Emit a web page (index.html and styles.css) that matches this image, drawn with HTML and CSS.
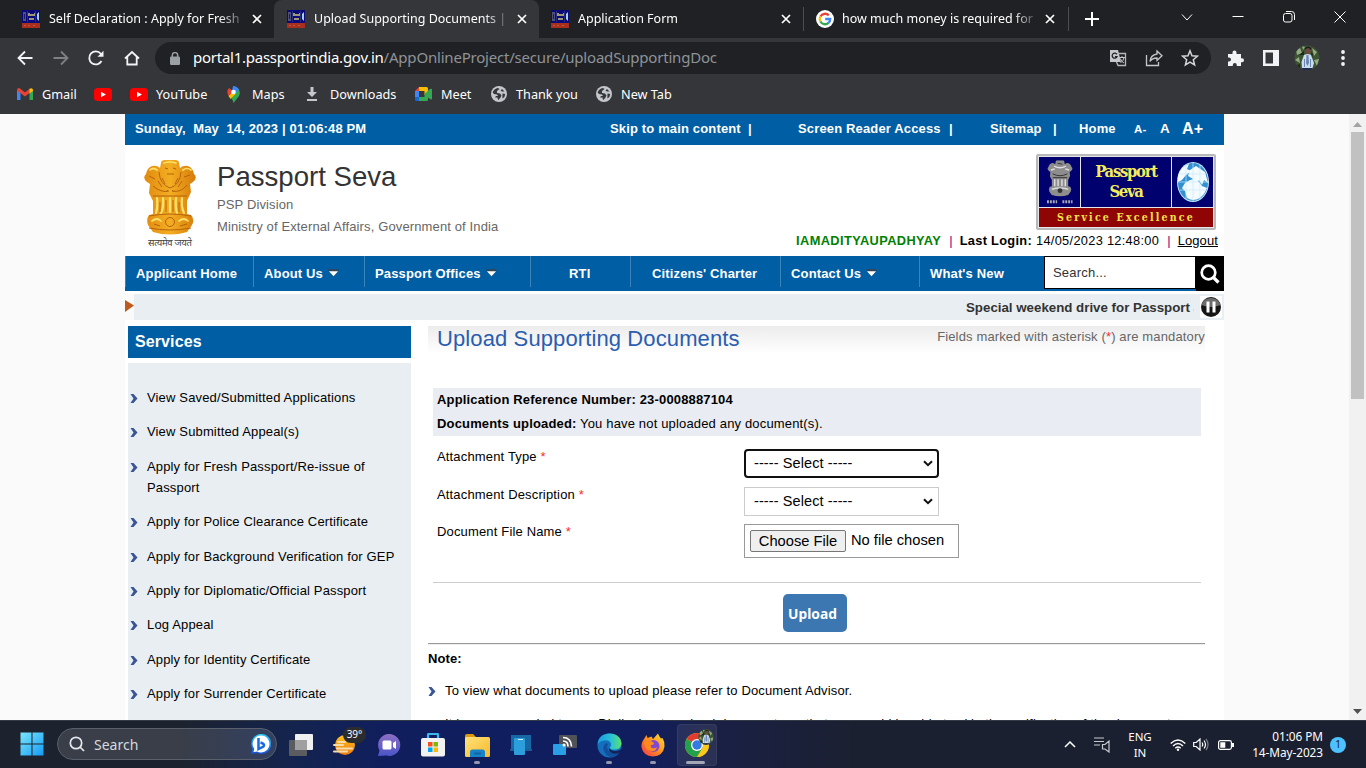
FILE: index.html
```html
<!DOCTYPE html>
<html lang="en">
<head>
<meta charset="utf-8">
<title>Upload Supporting Documents | Passport Seva</title>
<link rel="stylesheet" href="styles.css">
</head>
<body>
<svg class="defs" aria-hidden="true">
  <defs>
    <linearGradient id="gold" x1="0" x2="1"><stop offset="0" stop-color="#e08a10"/><stop offset=".5" stop-color="#f3ae22"/><stop offset="1" stop-color="#d67c0a"/></linearGradient>
    <linearGradient id="win" x1="0" y1="0" x2="1" y2="1"><stop offset="0" stop-color="#7ae6fb"/><stop offset="1" stop-color="#159bf5"/></linearGradient>
    <linearGradient id="sun" x1="0" y1="0" x2="0" y2="1"><stop offset="0" stop-color="#fcc419"/><stop offset="1" stop-color="#f07a12"/></linearGradient>
    <linearGradient id="edge" x1="0" y1="0" x2="1" y2="0"><stop offset="0" stop-color="#1b9de2"/><stop offset=".6" stop-color="#2bc3d2"/><stop offset="1" stop-color="#5fe066"/></linearGradient>
    <linearGradient id="fox" x1="1" y1="0" x2="0" y2="1"><stop offset="0" stop-color="#ffe23a"/><stop offset=".5" stop-color="#ff8f1f"/><stop offset="1" stop-color="#f2314f"/></linearGradient>
    <linearGradient id="folder" x1="0" y1="0" x2="1" y2="1"><stop offset="0" stop-color="#ffe27a"/><stop offset="1" stop-color="#f7b92c"/></linearGradient>
    <linearGradient id="chat" x1="0" y1="0" x2="0" y2="1"><stop offset="0" stop-color="#8e6fc2"/><stop offset="1" stop-color="#4a55c9"/></linearGradient>
    <linearGradient id="bing" x1="0" y1="0" x2="0" y2="1"><stop offset="0" stop-color="#2ec8f5"/><stop offset="1" stop-color="#1650d8"/></linearGradient>
    <symbol id="fav" viewBox="0 0 18 18"><path fill="#0a0a78" d="M0 0h18v13H0z"/><path fill="#a8301f" d="M0 13h18v5H0z"/><path fill="#50507c" d="M1 2h3v9H1z"/><path fill="#1c1c66" d="M2 4h1v5H2z"/><path fill="#9a9878" d="M6 3h2v1h4V3h1v3H6zM7 8h5v2H7z"/><path fill="#2e2e80" d="M5 1h1v11H5zM13 1h1v11h-1z"/><path fill="#a4d2ee" d="M15 4l2-2v9l-2-2z"/><path fill="#c4553a" d="M2 15h2v1H2zM6 15h2v1H6zM11 15h2v1h-2z"/></symbol>
    <symbol id="x" viewBox="0 0 10 10"><path stroke="#fff" stroke-width="1.7" d="M1 1l8 8M9 1L1 9"/></symbol>
    <symbol id="globe" viewBox="0 0 16 16"><circle cx="8" cy="8" r="8" fill="#c3c6ca"/><path fill="#35363a" d="M1.600 6.500Q3 2.600 7 2l1.500 1L6 5v2l3 .5 1.500 2-1 2-2 2.500q-1-1-1-2.500H4l1-1.500h2L6 8.500 3 8zM11 3l2.500 2.500H11L9.500 4.500zM11.500 7.500l2.700.5-.8 3-2 1.500z"/></symbol>
    <symbol id="yt" viewBox="0 0 18 13"><rect width="18" height="13" rx="3.500" fill="#f00"/><path d="M7 3.700l5 2.800-5 2.800z" fill="#fff"/></symbol>
    <symbol id="bullet" viewBox="0 0 8 9"><path fill="#3a5596" d="M.5 0h3L7.500 4.500 3.500 9h-3l3-4.500z"/></symbol>
    <symbol id="photo" viewBox="0 0 26 26"><clipPath id="pc"><circle cx="13" cy="13" r="12.500"/></clipPath><g clip-path="url(#pc)"><path fill="#3d5433" d="M0 0h26v26H0z"/><path fill="#93ab83" d="M2 5l4-2 2 5-5 2zM18 3l5 4-3 4zM1 15l4-3 1 6zM20 15l5-1-2 7zM8 1l3 1-2 3z"/><path fill="#1c2919" d="M5 10l5-4v4zM17 7l2 2-1 4zM3 20l3-1v5z"/><path fill="#c9dcf0" d="M10 10q4-2 7 0l3 8-1.500 5H8l-.5-6z"/><path fill="#6b87b0" d="M10 14h1v8h-1zM16 14h1v8h-1zM12.500 10h2l.5 8-1.500 3-1.500-3z"/><circle cx="14" cy="6" r="3" fill="#6a4a3c"/><path fill="#1c1b22" d="M11 5q3-4 6 0v-2q-3-3-6 0z"/><path fill="#232e4c" d="M8 23h10v3H8z"/></g></symbol>
    <symbol id="lions" viewBox="0 0 54 76"><path d="M18 3q0-3 4-3h10q4 0 4 3l1 5q3-3 8-2 5 2 6 8 4 4-1 8l-3 2 1 8-4 9v13l4 1q4 4 1 10l-5 7q-17 5-34 0l-5-7q-2-6 1-10l4-1V41l-4-8 1-9-3-2q-5-4-1-8 1-6 6-8 5-1 8 2z"/></symbol>
    <symbol id="down" viewBox="0 0 12 8"><path d="M0 0h12L6 8z" fill="#38424c"/><path d="M1 2h10L6 7.500z" fill="#fff"/></symbol>
  </defs>
</svg>

<header class="browser">
  <div class="tabs">
    <div class="tab"><svg class="fav"><use href="#fav"/></svg><span class="tab-title">Self Declaration : Apply for Fresh</span><svg class="close"><use href="#x"/></svg></div>
    <div class="tab active"><svg class="fav"><use href="#fav"/></svg><span class="tab-title">Upload Supporting Documents |</span><svg class="close"><use href="#x"/></svg></div>
    <div class="tab third"><svg class="fav"><use href="#fav"/></svg><span class="tab-title">Application Form</span><svg class="close"><use href="#x"/></svg></div>
    <div class="tab sep"><svg class="fav" viewBox="0 0 18 18"><circle cx="9" cy="9" r="9" fill="#fff"/><g fill="none" stroke-width="2.300"><path stroke="#ea4335" d="M4.400 6.500A5.200 5.200 0 0 1 12.800 5.400"/><path stroke="#fbbc05" d="M4.400 11.500A5.200 5.200 0 0 1 4.400 6.500"/><path stroke="#34a853" d="M12.500 12.900A5.200 5.200 0 0 1 4.400 11.500"/><path stroke="#4285f4" d="M9.200 9H14.200A5.200 5.200 0 0 1 12.400 13"/></g></svg><span class="tab-title">how much money is required for</span><svg class="close"><use href="#x"/></svg></div>
    <div class="newtab"><svg width="14" height="14" viewBox="0 0 14 14"><path stroke="#fff" stroke-width="2" d="M7 0v14M0 7h14"/></svg></div>
    <div class="winctl">
      <svg viewBox="0 0 12 12"><path d="M1 3.500l5 5.500 5-5.500"/></svg>
      <svg viewBox="0 0 12 12"><path d="M.5 5.500h11"/></svg>
      <svg viewBox="0 0 12 12"><rect x=".5" y="2.500" width="8.500" height="8.500" rx="2"/><path d="M3 .5h5.500Q11.500.5 11.500 3.500V9"/></svg>
      <svg viewBox="0 0 12 12"><path d="M.5.5l11 11M11.500.5l-11 11"/></svg>
    </div>
  </div>
  <div class="toolbar">
    <div class="navbtns">
      <svg viewBox="0 0 16 16"><path d="M15.500 8H2M8 1.500L1.500 8 8 14.500"/></svg>
      <svg class="dim" viewBox="0 0 16 16"><path d="M.5 8H14M8 1.500L14.500 8 8 14.500"/></svg>
      <svg viewBox="0 0 16 16"><path d="M13.500 11A6.500 6.500 0 1 1 12.800 3.800L14 5.200"/><path d="M15.500.8V6.800h-6z" fill="#f1f3f4" stroke="none"/></svg>
      <svg viewBox="0 0 16 16"><path d="M1 8.500L8 2l7 6.500M3.300 7v7.500h9.400V7"/></svg>
    </div>
    <div class="omnibox">
      <svg width="10" height="13" viewBox="0 0 10 13"><rect y="4.500" width="10" height="8.500" rx="1.300" fill="#9aa0a6"/><path d="M2.300 5V3.300a2.700 2.700 0 0 1 5.400 0V5" fill="none" stroke="#9aa0a6" stroke-width="1.500"/></svg>
      <span class="host">portal1.passportindia.gov.in</span><span class="path">/AppOnlineProject/secure/uploadSupportingDoc</span>
      <div class="omni-icons">
        <svg viewBox="0 0 18 18"><path fill="#c4c7cb" d="M1 1h8l3 12H1z"/><path d="M8 4.500h8.500v12H9L7.500 13" fill="none" stroke="#b4b7bb" stroke-width="1.300"/><path d="M7.800 5.300a2.500 2.500 0 1 0 .2 2.300H6" fill="none" stroke="#202124" stroke-width="1.300"/><path d="M10.500 8.500H16M13 7v1.500M11.500 14q3-2 3.500-5.500M11.300 9.500q1 3 3.700 4.500" fill="none" stroke="#c4c7cb"/></svg>
        <svg viewBox="0 0 18 18"><g fill="none" stroke="#c4c7cb" stroke-width="1.300"><path d="M1.500 6v10.500h12V13"/><path d="M12 2l5 4.800-5 4.700V9Q7 9 5 12.500 5.500 6 12 5z"/></g></svg>
        <svg viewBox="0 0 18 18"><path fill="none" stroke="#d3d5d8" stroke-width="1.500" d="M9 1.800l2 5 5.400.4-4.100 3.500 1.300 5.300L9 13.200 4.400 16l1.300-5.300L1.600 7.200 7 6.800z"/></svg>
      </div>
    </div>
    <div class="ext">
      <svg width="17" height="17" viewBox="0 0 17 17"><path fill="#f1f3f4" d="M1 4h4.500V2.600a2 2 0 0 1 4 0V4H14v4.300h1a2 2 0 0 1 0 4h-1V16H9.800v-1a2 2 0 0 0-4 0v1H1v-4.500h1a2 2 0 0 0 0-4H1z"/></svg>
      <svg width="16" height="16" viewBox="0 0 16 16"><path fill="#f1f3f4" fill-rule="evenodd" d="M0 0h16v16H0zM2.500 2.500v11H10v-11z"/></svg>
      <svg width="26" height="26"><use href="#photo"/></svg>
      <svg width="4" height="16" viewBox="0 0 4 16"><g fill="#f1f3f4"><circle cx="2" cy="2" r="1.900"/><circle cx="2" cy="8" r="1.900"/><circle cx="2" cy="14" r="1.900"/></g></svg>
    </div>
  </div>
  <div class="bookmarks">
    <span><svg width="16" height="12" viewBox="0 0 16 12"><path fill="#4285f4" d="M0 2l3.500 2.500V12H0z"/><path fill="#34a853" d="M12.500 4.500L16 2v10h-3.500z"/><path fill="#ea4335" d="M0 2Q.5-.8 3 .5l5 4 5-4v4L8 8.500 0 2.500z"/><path fill="#fbbc04" d="M12.500.8Q15.500-.8 16 2v1l-3.500 2.500z"/></svg>Gmail</span>
    <span><svg width="18" height="13"><use href="#yt"/></svg></span>
    <span class="near"><svg width="18" height="13"><use href="#yt"/></svg>YouTube</span>
    <span class="wide"><svg width="13" height="17" viewBox="0 0 13 17"><path fill="#34a853" d="M1.500 10L11 2.500Q14 6 12 10L6.500 17Q5.500 13 3.500 11.500z"/><path fill="#fbbc04" d="M1.500 10L6 5l2.500 3L3.500 13z"/><path fill="#4285f4" d="M6 0q4 0 6 3.500L8 8 5 5z"/><path fill="#ea4335" d="M2 2L6 5 1.500 10Q-1 5 2 2z"/><circle cx="6.500" cy="6" r="2.300" fill="#fff"/></svg>Maps</span>
    <span class="wide"><svg width="12" height="14" viewBox="0 0 12 14"><path fill="#c4c7cb" d="M4.500 0h3v5H11L6 10 1 5h3.500zM1 12h10v2H1z"/></svg>Downloads</span>
    <span><svg width="17" height="14" viewBox="0 0 17 14"><path fill="#ea4335" d="M0 4l4-4v4z"/><path fill="#4285f4" d="M0 4h4v6H0z"/><path fill="#1967d2" d="M0 10h4v4H1.500Q0 14 0 12.500z"/><path fill="#fbbc04" d="M4 0h7.500Q13 0 13 1.500V6L9.500 8V4H4z"/><path fill="#34a853" d="M4 10h5.500V7L15 2q2-1 2 1v8.500q0 1.500-2 .5l-2-1.500V13q0 1-1.500 1H4z"/></svg>Meet</span>
    <span><svg width="16" height="16"><use href="#globe"/></svg>Thank you</span>
    <span><svg width="16" height="16"><use href="#globe"/></svg>New Tab</span>
  </div>
</header>

<div class="viewport">
  <div class="site">
    <div class="topbar">
      <span>Sunday,&nbsp; May&nbsp; 14, 2023 | 01:06:48 PM</span><span>Skip to main content</span><span>|</span><span>Screen Reader Access</span><span>|</span><span>Sitemap</span><span>|</span><span>Home</span><span class="a-s">A-</span><span class="a-m">A</span><span class="a-l">A+</span>
    </div>
    <div class="masthead">
      <svg class="emblem" width="56" height="94" viewBox="0 0 56 94">
        <use href="#lions" x="1" y="1" width="54" height="76" fill="url(#gold)"/>
        <g fill="none" stroke="#ffe06a" stroke-width="2.200" stroke-linecap="round"><path d="M15 39q1 9-1 15M21 39q1 9-2 15M28 39v14M34 39q-1 9 1 15M40 39q-1 9 2 15"/><path d="M8 11q3-3 7 0M41 11q4-3 8 0M22 4q6-2 12 0M10 62q5-4 9 0M37 62q5-4 9 0" stroke-width="1.700"/></g>
        <g fill="none" stroke="#b8630c" stroke-width="1"><path d="M17 13q1 13 11 16M39 13q-1 13-11 16M23 9l3 1M31 9l3 1M25 15h7M7 17l6 3M42 18l6-2M11 27q8 7 16 5M30 32q9 2 15-6M11 37h34M18 43v10M24 41v12M31 41v12M37 43v10M7 57q21-4 42 0M7 69q21 4 42 0M12 65l6 2M38 67l7-2M16 22l4 6M20 19l3 6M40 22l-4 6M36 19l-3 6M24 33l2-2M32 33l-2-2"/><circle cx="28" cy="63" r="4.500"/></g>
        <text x="28" y="87" text-anchor="middle" font-size="9.500" fill="#444" textLength="44">सत्यमेव जयते</text>
      </svg>
      <div class="brand"><h1>Passport Seva</h1><p>PSP Division</p><p>Ministry of External Affairs, Government of India</p></div>
      <div class="account">
        <div class="logo">
          <div class="logo-top">
            <div><svg width="26" height="45" viewBox="0 0 54 92"><use href="#lions" width="54" height="76" fill="#8d8d8d"/><path d="M15 12q12 7 24 0M16 39v15M23 39v15M31 39v15M38 39v15M10 60q17-5 34 0M8 20l8-2M38 18l8 2" stroke="#ddd" stroke-width="3" fill="none"/><path d="M12 28q15 8 30 0M22 6l10 2M12 36h30" stroke="#333" stroke-width="2" fill="none"/><circle cx="27" cy="63" r="5" fill="#333"/><path d="M0 86h21M32 86h21" stroke="#a8a8b8" stroke-width="6" stroke-dasharray="4 2"/></svg></div>
            <div class="logo-name"><span>Passport</span><span>Seva</span></div>
            <div><svg width="34" height="40" viewBox="0 0 34 40"><ellipse cx="17" cy="20" rx="16" ry="20" fill="#bfe6f8"/><ellipse cx="17" cy="20" rx="15" ry="19" fill="#318fd2"/><path fill="#f3fbff" d="M2 14Q5 4 13 2l-2 5 4 2-5 4-4 5-4 2zM14 8l6-4 9 6 3 11-4-3-2 5-3-5-3 7-3-8-5-3zM9 21l5-3 4-1 5 3 3 4 5 2-3 6-4 4q-7 4-13 0l-2-7-3-3z"/><path d="M4 12h26M1 20h32M4 28h26M10 3v34M17 1v38M24 3v34" stroke="#cbeaf8" stroke-width=".7"/></svg></div>
          </div>
          <div class="logo-tag">Service Excellence</div>
        </div>
        <div class="login"><b class="user">IAMADITYAUPADHYAY</b><i>|</i><b class="last">Last Login:</b><span class="stamp">14/05/2023 12:48:00</span><i>|</i><a>Logout</a></div>
      </div>
    </div>
    <nav class="menu">
      <span>Applicant Home</span><span>About Us <svg><use href="#down"/></svg></span><span>Passport Offices <svg><use href="#down"/></svg></span><span>RTI</span><span>Citizens' Charter</span><span>Contact Us <svg><use href="#down"/></svg></span><span>What's New</span>
      <div class="search">Search...</div>
      <div class="go"><svg width="20" height="20" viewBox="0 0 20 20"><circle cx="8.500" cy="8.500" r="6.800" fill="none" stroke="#fff" stroke-width="2.700"/><path d="M13.500 13.500l5 5" stroke="#fff" stroke-width="3.200"/></svg></div>
    </nav>
    <div class="ticker">
      <div class="play"><svg width="9" height="12" viewBox="0 0 9 12"><path d="M0 0l9 5.500L0 12z" fill="#c05a1c"/></svg></div>
      <div class="news">Special weekend drive for Passport a</div>
      <div class="pause"><svg width="22" height="22" viewBox="0 0 22 22"><circle cx="11" cy="11" r="10" fill="#161616"/><path d="M1.500 9A10 10 0 0 1 20.500 9Q11 13 1.500 9z" fill="#6d6d6d"/><rect x="6.500" y="5.500" width="3" height="11" fill="#fff"/><rect x="12.500" y="5.500" width="3" height="11" fill="#fff"/></svg></div>
    </div>
    <div class="columns">
      <aside>
        <h2>Services</h2>
        <ul>
          <li><svg><use href="#bullet"/></svg><span>View Saved/Submitted Applications</span></li>
          <li><svg><use href="#bullet"/></svg><span>View Submitted Appeal(s)</span></li>
          <li><svg><use href="#bullet"/></svg><span>Apply for Fresh Passport/Re-issue of Passport</span></li>
          <li><svg><use href="#bullet"/></svg><span>Apply for Police Clearance Certificate</span></li>
          <li><svg><use href="#bullet"/></svg><span>Apply for Background Verification for GEP</span></li>
          <li><svg><use href="#bullet"/></svg><span>Apply for Diplomatic/Official Passport</span></li>
          <li><svg><use href="#bullet"/></svg><span>Log Appeal</span></li>
          <li><svg><use href="#bullet"/></svg><span>Apply for Identity Certificate</span></li>
          <li><svg><use href="#bullet"/></svg><span>Apply for Surrender Certificate</span></li>
        </ul>
      </aside>
      <main>
        <div class="heading"><h2>Upload Supporting Documents</h2><p>Fields marked with asterisk (<em>*</em>) are mandatory</p></div>
        <div class="info"><p><b>Application Reference Number: 23-0008887104</b></p><p><b>Documents uploaded:</b> You have not uploaded any document(s).</p></div>
        <form>
          <label>Attachment Type <em>*</em></label><div class="select focus">----- Select -----<svg viewBox="0 0 10 7"><path d="M1 1.200l4 4 4-4"/></svg></div>
          <label>Attachment Description <em>*</em></label><div class="select">----- Select -----<svg viewBox="0 0 10 7"><path d="M1 1.200l4 4 4-4"/></svg></div>
          <label>Document File Name <em>*</em></label><div class="file"><button type="button">Choose File</button><span>No file chosen</span></div>
        </form>
        <div class="submit"><button type="button">Upload</button></div>
        <section class="notes"><h3>Note:</h3>
          <p><svg><use href="#bullet"/></svg><span>To view what documents to upload please refer to Document Advisor.</span></p>
          <p><svg></svg><span>It is recommended to use Digilocker to upload documents so that you would be able to skip the verification of the documents.</span></p>
        </section>
      </main>
    </div>
  </div>
  <div class="scrollbar"><svg width="9" height="5" viewBox="0 0 9 5"><path d="M0 5L4.500 0 9 5z" fill="#a3a3a3"/></svg><div class="thumb"></div><svg width="9" height="5" viewBox="0 0 9 5"><path d="M0 0h9L4.500 5z" fill="#505050"/></svg></div>
</div>

<footer class="taskbar">
  <svg class="start" width="24" height="24" viewBox="0 0 24 24"><path fill="url(#win)" d="M.5.5h11v11H.5zM12.500.5h11v11h-11zM.5 12.500h11v11H.5zM12.500 12.500h11v11h-11z"/></svg>
  <div class="tsearch"><svg width="16" height="16" viewBox="0 0 16 16"><g fill="none" stroke="#e4e7eb" stroke-width="1.700"><circle cx="7" cy="7" r="5.700"/><path d="M11 11l4 4"/></g></svg><span>Search</span><svg class="bing" width="20" height="20" viewBox="0 0 20 20"><path fill="url(#bing)" d="M10 0a10 10 0 1 1-4 19L0 20l1.500-5A10 10 0 0 1 10 0z"/><path fill="#fff" d="M10 1.500a8.500 8.500 0 1 1-4 16L2.500 18l.8-3A8.500 8.500 0 0 1 10 1.500z"/><path fill="none" stroke="#1769df" stroke-width="2.500" d="M7.500 4v11l5-2.500q2-2.500-3-4"/></svg></div>
  <div class="apps">
    <div><svg width="24" height="22" viewBox="0 0 24 22"><rect x="6" width="18" height="16" rx="1" fill="#f0f0f0"/><rect y="6" width="18" height="16" rx="1" fill="#5f6060" opacity=".95"/><path d="M6 6h12v10H6z" fill="#a0a0a0"/></svg></div>
    <div class="weather"><svg width="24" height="24" viewBox="0 0 24 24"><circle cx="12" cy="12" r="10" fill="url(#sun)"/><path stroke="#f6dcad" stroke-width="2" stroke-linecap="round" d="M1 12h9M4 15.500h15M1 18.500h13M5 9h7"/></svg><span>39°</span></div>
    <div><svg width="24" height="24" viewBox="0 0 24 24"><path fill="url(#chat)" d="M12 1a11 11 0 1 1-3 21.500L1 23l1.500-5.500A11 11 0 0 1 12 1z"/><rect x="5.500" y="7.500" width="9" height="9" rx="1.500" fill="#fff"/><path fill="#fff" d="M16 10l3-2v8l-3-2z"/></svg></div>
    <div><svg width="24" height="24" viewBox="0 0 24 24"><path d="M7 5V1.800q0-1 1-1h8q1 0 1 1V5" fill="none" stroke="#3bb9ec" stroke-width="2.200"/><rect y="5" width="24" height="18.500" rx="2" fill="#f2f2f2"/><path fill="#f25022" d="M7 9h4.500v4.500H7z"/><path fill="#7fba00" d="M12.500 9H17v4.500h-4.500z"/><path fill="#00a4ef" d="M7 14.500h4.500V19H7z"/><path fill="#ffb900" d="M12.500 14.500H17V19h-4.500z"/></svg></div>
    <div class="open"><svg width="25" height="23" viewBox="0 0 25 23"><path fill="#dd9a0e" d="M0 2q0-2 2-2h6l3 3v5H0z"/><rect y="3" width="25" height="20" rx="1.500" fill="url(#folder)"/><path fill="#1682ca" d="M5 22v-4q0-2.500 2.500-2.500h10Q20 15.500 20 18v5H5z"/><path fill="#10659e" d="M9 18.500h7v2H9z"/></svg></div>
    <div><svg width="24" height="24" viewBox="0 0 24 24"><path fill="#1767a4" d="M2 2h20v14H2z"/><path fill="#1d5d94" d="M1 16h22v2H1z"/><rect x="5" y="5" width="11" height="17" rx="1" fill="#2c9edb"/><path fill="#d4effb" d="M9 6h5v1H9z"/></svg></div>
    <div><svg width="24" height="20" viewBox="0 0 24 20"><rect x="6" width="18" height="13" rx="1" fill="#505258"/><rect y="9" width="13" height="11" rx="1" fill="#2a9fe6"/><g fill="none" stroke="#fff" stroke-width="1.700"><path d="M10 2.500q8 0 8.500 9M10 6q5 0 5 5.500"/></g><circle cx="11" cy="10" r="1.500" fill="#fff"/></svg></div>
    <div class="open"><svg width="25" height="25" viewBox="0 0 25 25"><circle cx="12.500" cy="12.500" r="12" fill="#1470bc"/><path fill="url(#edge)" d="M.5 12Q1 1 12.500.5 24 1 24.500 11q-1 6-8 5.500-4 0-4-2 2-1 1.500-4-2-4-7-3-5 .5-6.500 4.500z"/><path fill="#12509b" d="M9 10q-4 3-2 8 2 5 8 6.500 5-1 7.500-5Q16 22 12 18q-3-3-1-7z"/><path fill="#12235c" d="M12.300 14q1 4 6 4 3 0 6-2l-2 4q-6 2-9-1-2-2-1-5z"/></svg></div>
    <div class="open"><svg width="24" height="24" viewBox="0 0 24 24"><path fill="url(#fox)" d="M3 6L5.500 2l1 3 4-1.500L12 6l5-5.500q1 3 3 5l1.500-.5Q24 9 23.500 13.500 22 23 12 23.500 2 23 .5 14 .3 9 3 6z"/><circle cx="12.500" cy="13" r="6" fill="#8149d2"/><path fill="#ff8a1d" d="M3 9l7-1 3 2q0 2-3 2-1 2 1 3 3 1 5-1-1 5-6 4-5-1-6-5z"/></svg></div>
    <div class="open current"><svg width="29" height="28" viewBox="0 0 29 28"><circle cx="12" cy="16" r="12" fill="#f9c81d"/><path fill="#e23c2f" d="M12 16L1.600 10A12 12 0 0 1 22.400 10z"/><path fill="#24a14b" d="M12 16L1.600 10A12 12 0 0 0 12 28l6-10z"/><path fill="#f9c81d" d="M12 10.500h10.600A12 12 0 0 1 12 28l6-9z"/><circle cx="12" cy="16" r="6" fill="#fff"/><circle cx="12" cy="16" r="4.700" fill="#3479e4"/><use href="#photo" x="13" y="0" width="16" height="16"/></svg></div>
  </div>
  <div class="tray">
    <svg width="12" height="7" viewBox="0 0 12 7"><path d="M1 6l5-5 5 5" fill="none" stroke="#fff" stroke-width="1.500"/></svg>
    <svg width="17" height="17" viewBox="0 0 17 17"><path d="M0 2h10M0 5.500h10M0 9h6M8.500 8.500H11l4-3.500v11l-4-3H8.500z" fill="none" stroke="#c6c9d0" stroke-width="1.200"/></svg>
    <div class="lang">ENG<br>IN</div>
    <svg width="16" height="12" viewBox="0 0 16 12"><g fill="none" stroke="#fff" stroke-width="1.400"><path d="M.7 4.500q7.300-7 14.600 0M3 7q5-4.800 10 0M5.300 9.300q2.700-2.500 5.400 0"/></g><circle cx="8" cy="10.700" r="1.200" fill="#fff"/></svg>
    <svg width="16" height="13" viewBox="0 0 16 13"><g fill="none" stroke="#fff" stroke-width="1.200"><path d="M.7 4.500h2.500L7 1v11L3.200 8.500H.7zM9 4.500q1.500 2 0 4M11 2.500q3 4 0 8"/><path stroke="#777c88" d="M13 .8q4 5.700 0 11.400"/></g></svg>
    <svg width="16" height="10" viewBox="0 0 16 10"><rect x=".6" y=".6" width="12.800" height="8.800" rx="1.800" fill="none" stroke="#fff" stroke-width="1.200"/><path fill="#fff" d="M2.300 2.300h5v5.400h-5zM14 3h2v4h-2z"/></svg>
    <div class="clock">01:06 PM<br>14-May-2023</div>
    <div class="badge">1</div>
  </div>
</footer>
</body>
</html>
```
FILE: styles.css
```css
* { box-sizing: border-box; }
body, h1, h2, h3, p, ul { margin: 0; padding: 0; }
body { width: 1366px; height: 768px; overflow: hidden; display: flex; flex-direction: column; font-family: "Liberation Sans", Arial, sans-serif; }
svg { display: block; flex: none; }
em { color: #ff2a2a; font-style: normal; }
.defs { position: absolute; width: 0; height: 0; }

.browser, .taskbar { font-family: "Noto Sans", "Open Sans", sans-serif; color: #fff; }
.browser { flex: none; height: 114px; background: #35363a; }
.tabs { height: 38px; display: flex; background: #202124; }
.tab { width: 265px; height: 38px; display: flex; align-items: center; padding-left: 13px; font-size: 12.500px; }
.tab:first-child { width: 274px; padding-left: 22px; }
.tab.active { background: #35363a; border-radius: 8px 8px 0 0; }
.tab.third { width: 264px; padding-left: 12px; }
.tab.sep { border: solid #4b4d51; border-width: 0 1px; border-image: linear-gradient(transparent 8px, #4b4d51 8px, #4b4d51 30px, transparent 30px) 1; }
.tab.sep { width: 266px; padding-left: 12px; }
.fav { width: 18px; height: 18px; }
.tab-title { width: 193px; margin-left: 9px; margin-top: -2px; white-space: nowrap; overflow: hidden; -webkit-mask-image: linear-gradient(90deg, #000 170px, rgba(0,0,0,.2) 193px); }
.sep .tab-title { margin-left: 8px; }
.close { width: 10px; height: 10px; margin-left: 10px; }
.newtab { margin: 12px 0 0 16px; }
.winctl { display: flex; gap: 39px; margin: 11px 0 0 82px; }
.winctl svg { width: 12px; height: 12px; fill: none; stroke: #fff; }
.toolbar { height: 38px; display: flex; align-items: center; padding-top: 2px; }
.navbtns { display: flex; gap: 19.500px; padding-left: 17px; width: 155px; }
.navbtns svg { width: 16px; height: 16px; fill: none; stroke: #f1f3f4; stroke-width: 1.800; }
.navbtns .dim { stroke: #7d8084; }
.omnibox { width: 1056px; height: 32px; border-radius: 16px; background: #202124; display: flex; align-items: center; padding-left: 15px; font-size: 15px; }
.host, .path { margin-top: -2px; letter-spacing: -.25px; }
.host { margin-left: 13px; }
.path { color: #8f9398; letter-spacing: -.2px; }
.omni-icons { display: flex; gap: 18px; margin-left: auto; margin-right: 12px; }
.omni-icons svg { width: 18px; height: 18px; }
.ext { display: flex; align-items: center; margin-left: 16px; }
.ext svg:nth-child(2) { margin-left: 19px; }
.ext svg:nth-child(3) { margin-left: 15px; }
.ext svg:nth-child(4) { margin-left: 21px; }
.bookmarks { height: 36px; display: grid; grid-template-columns: 77px 36px 97px 79px 109px 76px 105px 120px; padding-left: 17px; align-items: center; font-size: 12.700px; }
.bookmarks span { display: flex; align-items: center; gap: 9px; white-space: nowrap; }
.bookmarks .near { gap: 8px; }
.bookmarks .wide { gap: 12px; }

.viewport { flex: none; height: 606px; display: flex; background: #fafafa; overflow: hidden; }
.site { width: 1099px; height: 620px; margin-left: 125px; background: #fff; overflow: hidden; }
.topbar { height: 31px; background: #005ea5; color: #fff; font-weight: bold; font-size: 13px; letter-spacing: .15px; display: grid; grid-template-columns: 475px 138px 50px 151px 41px 63px 26px 55px 26px 22px 40px; padding-left: 10px; align-items: center; white-space: nowrap; padding-bottom: 2px; }
.a-s { font-size: 11.500px; }
.a-m { font-size: 13.500px; }
.a-l { font-size: 16px; }
.masthead { height: 111px; display: flex; }
.emblem { margin: 14px 0 0 17px; font-family: "Noto Sans Devanagari", sans-serif; }
.brand { margin-left: 19px; padding-top: 15px; color: #666; font-size: 13px; }
.brand h1 { font-weight: normal; font-size: 27.600px; line-height: 34px; color: #333; }
.brand p { line-height: 22px; letter-spacing: .13px; white-space: nowrap; }
.account { margin-left: auto; display: flex; flex-direction: column; align-items: flex-end; }
.logo { width: 180px; height: 76px; margin: 9px 8px 0 0; border: 2px solid #b9b9b9; padding: 1px; background: #e5e5ea; display: flex; flex-direction: column; gap: 1px; border-radius: 2px; font-family: "DejaVu Serif Condensed", "DejaVu Serif", serif; font-weight: bold; }
.logo-top { height: 51px; display: grid; grid-template-columns: 41px 90px 41px; gap: 1px; }
.logo-top > div { background: #00006e; display: flex; align-items: center; justify-content: center; }
.logo-top .logo-name { color: #f3ed5c; font-size: 16.500px; letter-spacing: -1.300px; line-height: 20px; flex-direction: column; }
.logo-tag { height: 19px; background: #8f0505; color: #f3e34b; font-size: 10.500px; line-height: 18px; letter-spacing: 2.200px; text-align: center; white-space: nowrap; }
.login { display: flex; margin-right: 6px; font-size: 13px; line-height: 20px; white-space: nowrap; letter-spacing: .1px; padding-top: 1px; }
.login i { color: #800080; font-style: normal; margin: 0 7px 0 8px; }
.login .stamp { margin-left: 4px; font-size: 12.800px; letter-spacing: .3px; }
.user { color: #008000; font-size: 12.800px; letter-spacing: .4px; }
.last { font-size: 12.800px; letter-spacing: .3px; }
.login a { text-decoration: underline; }
.menu { height: 35px; background: #005ea5; color: #fff; display: grid; grid-template-columns: 128px 111px 166px 100px 150px 139px 125px 152px 28px; font-size: 13px; font-weight: bold; letter-spacing: .15px; }
.menu > span { display: flex; align-items: center; gap: 5px; height: 31px; padding: 3px 0 0 10px; border-left: 1px solid #3d83b9; white-space: nowrap; }
.menu > span:nth-child(4) { padding-left: 38px; }
.menu > span:nth-child(5) { padding-left: 21px; }
.menu svg { width: 11px; height: 8px; }
.search { height: 33px; background: #fff; border: 1px solid #000; color: #333; font-weight: normal; padding: 8px; line-height: 15px; letter-spacing: .2px; }
.go { background: #000; display: flex; align-items: center; justify-content: center; }
.menu .go svg { width: 20px; height: 20px; }
.ticker { height: 26px; margin-top: 3px; background: #e9eef2; display: flex; }
.play { width: 9px; padding-top: 6px; background: #fafafa; }
.news { width: 1060px; padding: 1px 0 0 832px; overflow: hidden; white-space: nowrap; font-size: 13.300px; font-weight: bold; line-height: 26px; color: #333; }
.pause { margin: 2px 0 0 6px; background: #fff; height: 22px; }
.columns { display: flex; margin: 6px 0 0 3px; }
aside { width: 283px; }
aside h2 { background: #005ea5; color: #fff; height: 32px; padding-left: 7px; font-size: 16px; line-height: 32px; letter-spacing: .1px; }
ul { list-style: none; margin-top: 5px; height: 400px; background: #e9eef2; padding-top: 24px; font-size: 13px; line-height: 21px; }
li { display: flex; margin-bottom: 13.400px; letter-spacing: .15px; }
li span { width: 262px; }
li svg, .notes svg { width: 8px; height: 9px; margin: 7px 9px 0 2px; }
main { width: 777px; margin-left: 17px; font-size: 13px; }
.heading { height: 62px; display: flex; justify-content: space-between; padding-left: 9px; background: linear-gradient(#ececec, #fff 28px); color: #666; }
.heading h2 { font-weight: normal; font-size: 22px; line-height: 25px; color: #2a5db0; letter-spacing: .11px; }
.heading p { line-height: 21px; letter-spacing: .14px; }
.info { margin: 0 4px 0 5px; height: 48px; background: #e9ecf2; padding-left: 4px; line-height: 24px; letter-spacing: .16px; }
form { margin: 0 4px 0 5px; height: 147px; border-bottom: 1px solid #ccc; padding: 13px 0 0 4px; display: grid; grid-template-columns: 307px auto; grid-template-rows: 38px 37px 34px; align-items: start; letter-spacing: .16px; }
label { line-height: 16px; }
.select { width: 195px; height: 29px; border: 1px solid #ccc; display: flex; align-items: center; justify-content: space-between; padding: 0 5px 1px 9px; font-size: 14.500px; letter-spacing: .1px; }
.select.focus { border: 2px solid #101010; border-radius: 4px; padding: 0 4px 1px 8px; }
.select svg { width: 10px; height: 7px; fill: none; stroke: #111; stroke-width: 2; }
.file { width: 215px; height: 34px; border: 1px solid #999; padding: 5px; display: flex; align-items: center; gap: 5px; font-size: 14.700px; letter-spacing: 0; white-space: nowrap; }
.file span { margin-top: -2px; }
.file button { width: 96px; height: 22px; padding: 0; border: 1px solid #767676; border-radius: 2px; background: #efefef; font: 14.700px "Liberation Sans", sans-serif; line-height: 20px; color: #000; }
.submit { height: 60px; padding: 11px 0 0 355px; }
.submit button { width: 64px; height: 38px; border: 0; border-radius: 5px; background: #3c77b2; color: #fff; font: bold 13.800px "Noto Sans", sans-serif; padding: 0 5px 0 0; }
.notes { border-top: 1px solid #999; box-shadow: inset 0 1px #eee; padding-top: 5px; }
.notes h3 { font-size: 13px; line-height: 20px; letter-spacing: .1px; }
.notes p { display: flex; line-height: 21px; margin-bottom: 12px; white-space: nowrap; letter-spacing: .15px; }
.notes h3 + p { margin-top: 11px; }
.notes svg { margin-left: 0; }
.scrollbar { width: 17px; margin-left: 125px; background: #f1f1f1; display: flex; flex-direction: column; align-items: center; padding: 8px 0 6px; }
.thumb { width: 13px; height: 267px; margin: 5px 0 auto; background: #c1c1c1; }

.taskbar { flex: none; height: 48px; border-top: 1px solid #343a46; display: flex; background: linear-gradient(90deg, #1c222e 0, #1c222e 180px, #14244e 290px, #101e5e 390px, #101e60 640px, #1a2046 710px, #1b2030 860px, #1b2030); }
.start { margin: 11px 0 0 20px; }
.tsearch { width: 220px; height: 32px; margin: 7px 0 0 13px; border: 1px solid #59606c; border-radius: 16px; background: rgba(255,255,255,.13); display: flex; align-items: center; padding-left: 11px; font-size: 14px; color: #d6d9dd; }
.tsearch span { margin-left: 9px; }
.bing { margin-left: auto; margin-right: 5px; }
.apps { display: flex; margin: 3px 0 0 2px; }
.apps > div { width: 44px; height: 42px; display: flex; align-items: center; justify-content: center; position: relative; }
.weather span { position: absolute; left: 20px; top: 3px; width: 23px; height: 16px; border-radius: 8px; background: #2b2c30; font-size: 10px; line-height: 15px; text-align: center; }
.open::after { content: ""; position: absolute; bottom: 2px; left: 19px; width: 6px; height: 3px; border-radius: 2px; background: #9297ac; }
.apps .current { width: 40px; margin-left: 2px; border-radius: 4px; background: rgba(255,255,255,.08); border: 1px solid rgba(255,255,255,.06); padding: 0 0 4px 4px; }
.current::after { left: 8px; width: 19px; bottom: 1px; background: #a3a6b6; }
.tray { margin-left: 347px; display: grid; grid-template-columns: 30px 26px 50px 23px 25px 16px 89px 23px; align-items: center; font-size: 11.800px; line-height: 15.500px; }
.lang { width: 40px; text-align: center; font-size: 11.500px; }
.clock { text-align: right; white-space: nowrap; letter-spacing: -.05px; }
.badge { width: 16px; height: 16px; margin-left: 7px; border-radius: 8px; background: #4cc2ff; color: #17202c; font-size: 10px; text-align: center; line-height: 15px; }
```
